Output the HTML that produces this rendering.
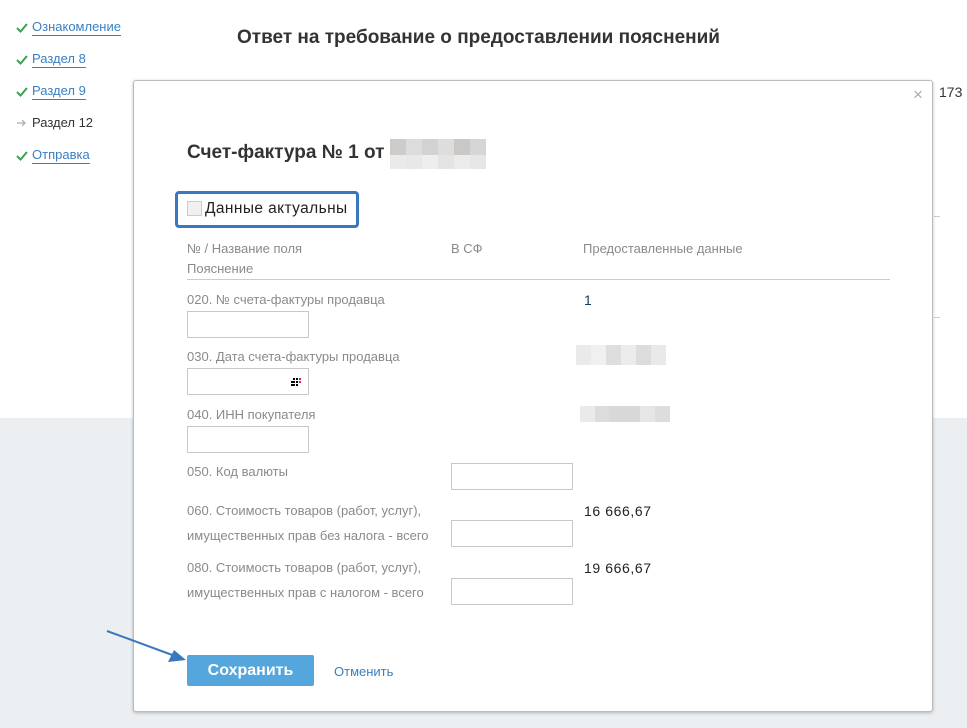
<!DOCTYPE html>
<html><head><meta charset="utf-8"><style>
*{margin:0;padding:0;box-sizing:border-box}
body{width:967px;height:728px;position:relative;overflow:hidden;background:#fff;font-family:"Liberation Sans",sans-serif}
.gray{position:absolute;left:0;top:418px;width:967px;height:310px;background:#eceff2}
.nav{position:absolute;left:32px;font-size:13px;color:#333}
.nav a{color:#3a7fc1;text-decoration:none;border-bottom:1px solid #3a7fc1;padding-bottom:1px}
.ico{position:absolute;left:16px}
.title{position:absolute;left:237px;top:27px;font-size:19px;font-weight:bold;color:#333}
.modal{position:absolute;left:133px;top:80px;width:800px;height:632px;background:#fff;border:1px solid #bbb;border-radius:3px;box-shadow:0 1px 3px rgba(0,0,0,.25)}
.abs{position:absolute}
.lbl{font-size:13px;color:#8a8a8a;line-height:25px}
.inp{position:absolute;width:122px;height:27px;border:1px solid #c8c8c8;background:#fff}
.blur{position:absolute;display:flex}
.blur span{display:block}
.val{font-size:14px;color:#222;letter-spacing:.6px}
</style></head><body>
<div class="gray"></div>
<svg class="ico" style="top:22px" width="12" height="12"><path d="M1 6 L4.5 9.5 L11 2" stroke="#3aa05a" stroke-width="2" fill="none"/></svg>
<div class="nav" style="top:19px"><a>Ознакомление</a></div>
<svg class="ico" style="top:54px" width="12" height="12"><path d="M1 6 L4.5 9.5 L11 2" stroke="#3aa05a" stroke-width="2" fill="none"/></svg>
<div class="nav" style="top:51px"><a>Раздел 8</a></div>
<svg class="ico" style="top:86px" width="12" height="12"><path d="M1 6 L4.5 9.5 L11 2" stroke="#3aa05a" stroke-width="2" fill="none"/></svg>
<div class="nav" style="top:83px"><a>Раздел 9</a></div>
<svg class="ico" style="top:118px;left:17px" width="10" height="10"><path d="M0 5 H8 M5 2 L8 5 L5 8" stroke="#aaa" stroke-width="1.2" fill="none"/></svg>
<div class="nav" style="top:115px">Раздел 12</div>
<svg class="ico" style="top:150px" width="12" height="12"><path d="M1 6 L4.5 9.5 L11 2" stroke="#3aa05a" stroke-width="2" fill="none"/></svg>
<div class="nav" style="top:147px"><a>Отправка</a></div>
<div class="title">Ответ на требование о предоставлении пояснений</div>
<div class="abs" style="left:939px;top:84px;font-size:14px;color:#333">173</div>
<div class="abs" style="left:934px;top:216px;width:6px;height:1px;background:#ccc"></div>
<div class="abs" style="left:934px;top:317px;width:6px;height:1px;background:#ccc"></div>

<div class="modal">
 <div class="abs" style="left:779px;top:4px;font-size:17px;color:#aaa">×</div>
 <div class="abs" style="left:53px;top:61px;font-size:19px;font-weight:bold;color:#333">Счет-фактура № 1 от</div>
 <div class="blur" style="left:256px;top:58px;flex-direction:column">
  <div style="display:flex;height:16px"><span style="width:16px;background:#cfcbc9"></span><span style="width:16px;background:#dcdcdc"></span><span style="width:16px;background:#d2d2d2"></span><span style="width:16px;background:#dddddd"></span><span style="width:16px;background:#cbc7c5"></span><span style="width:16px;background:#d6d6d6"></span></div>
  <div style="display:flex;height:14px"><span style="width:16px;background:#eaeaea"></span><span style="width:16px;background:#e8e8e8"></span><span style="width:16px;background:#eeeeee"></span><span style="width:16px;background:#e4e4e4"></span><span style="width:16px;background:#ebebeb"></span><span style="width:16px;background:#e6e6e6"></span></div>
 </div>
 <div class="abs" style="left:41px;top:110px;width:184px;height:37px;border:3px solid #3a78be;border-radius:4px"></div>
 <div class="abs" style="left:53px;top:120px;width:15px;height:15px;border:1px solid #ccc;background:#f0f0f0"></div>
 <div class="abs" style="left:71px;top:119px;font-size:15.5px;letter-spacing:.4px;color:#222">Данные актуальны</div>
 <div class="abs lbl" style="left:53px;top:155px">№ / Название поля</div>
 <div class="abs lbl" style="left:53px;top:175px">Пояснение</div>
 <div class="abs lbl" style="left:317px;top:155px">В СФ</div>
 <div class="abs lbl" style="left:449px;top:155px">Предоставленные данные</div>
 <div class="abs" style="left:53px;top:198px;width:703px;height:1px;background:#ccc"></div>

 <div class="abs lbl" style="left:53px;top:206px">020. № счета-фактуры продавца</div>
 <div class="inp" style="left:53px;top:230px"></div>
 <div class="abs val" style="left:450px;top:211px;color:#1a3a6a">1</div>

 <div class="abs lbl" style="left:53px;top:263px">030. Дата счета-фактуры продавца</div>
 <div class="inp" style="left:53px;top:287px"><svg class="abs" style="left:103px;top:9px" width="10" height="8"><g fill="#000"><rect x="2" y="0" width="2" height="2"/><rect x="5" y="0" width="2" height="2"/><rect x="0" y="3" width="2" height="2"/><rect x="2" y="3" width="2" height="2"/><rect x="5" y="3" width="2" height="2"/><rect x="0" y="6" width="2" height="2"/><rect x="2" y="6" width="2" height="2"/><rect x="5" y="6" width="2" height="2"/></g><rect x="8" y="0" width="2" height="2" fill="#e0204a"/><rect x="8" y="3" width="2" height="2" fill="#e0204a"/></svg></div>
 <div class="blur" style="left:442px;top:264px"><span style="width:15px;height:20px;background:#eaeaea"></span><span style="width:15px;height:20px;background:#f0f0f0"></span><span style="width:15px;height:20px;background:#dedede"></span><span style="width:15px;height:20px;background:#ececec"></span><span style="width:15px;height:20px;background:#dcdcdc"></span><span style="width:15px;height:20px;background:#e9e9e9"></span></div>

 <div class="abs lbl" style="left:53px;top:321px">040. ИНН покупателя</div>
 <div class="inp" style="left:53px;top:345px"></div>
 <div class="blur" style="left:446px;top:325px"><span style="width:15px;height:16px;background:#eaeaea"></span><span style="width:15px;height:16px;background:#dcdcdc"></span><span style="width:15px;height:16px;background:#d8d8d8"></span><span style="width:15px;height:16px;background:#d8d8d8"></span><span style="width:15px;height:16px;background:#e6e6e6"></span><span style="width:15px;height:16px;background:#dddddd"></span></div>

 <div class="abs lbl" style="left:53px;top:378px">050. Код валюты</div>
 <div class="inp" style="left:317px;top:382px"></div>

 <div class="abs lbl" style="left:53px;top:417px">060. Стоимость товаров (работ, услуг),<br>имущественных прав без налога - всего</div>
 <div class="inp" style="left:317px;top:439px"></div>
 <div class="abs val" style="left:450px;top:422px">16 666,67</div>

 <div class="abs lbl" style="left:53px;top:474px">080. Стоимость товаров (работ, услуг),<br>имущественных прав с налогом - всего</div>
 <div class="inp" style="left:317px;top:497px"></div>
 <div class="abs val" style="left:450px;top:479px">19 666,67</div>

 <div class="abs" style="left:53px;top:574px;width:127px;height:31px;background:#55a6dc;border-radius:2px;color:#fff;font-weight:bold;font-size:16px;text-align:center;line-height:31px">Сохранить</div>
 <div class="abs" style="left:200px;top:583px;font-size:13px;color:#3a7fc1">Отменить</div>
</div>
<svg class="abs" style="left:100px;top:628px" width="90" height="40"><line x1="7" y1="3" x2="75" y2="28" stroke="#3a78be" stroke-width="2"/><polygon points="86,32 68,34 74,22" fill="#3a78be"/></svg>
</body></html>
